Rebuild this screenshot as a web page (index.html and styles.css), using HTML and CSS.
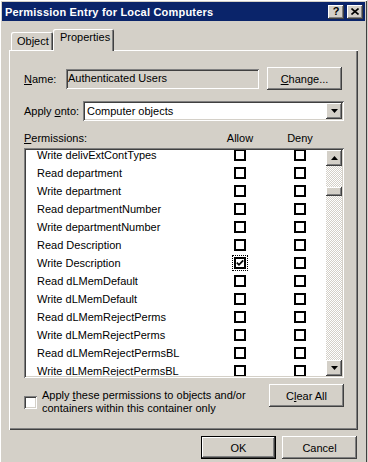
FILE: index.html
```html
<!DOCTYPE html>
<html lang="en">
<head>
  <title>Permission Entry for Local Computers</title>
  <meta charset="utf-8">
  <meta name="viewport" content="width=device-width, initial-scale=1">
  <link rel="stylesheet" href="styles.css">
</head>
<body>
  <div class="window">
    <div class="caption">
      <span class="caption-title">Permission Entry for Local Computers</span>
      <div class="caption-buttons">
        <button class="caption-button caption-help" type="button">?</button>
        <button class="caption-button" type="button" aria-label="Close">
          <svg width="8" height="7" viewBox="0 0 8 7">
            <path d="M0.5 0.5 L7.5 6.5 M7.5 0.5 L0.5 6.5" stroke="#000" stroke-width="1.6" fill="none"/>
          </svg>
        </button>
      </div>
    </div>

    <div class="dialog">
      <div class="tabs">
        <div class="tab">Object</div>
        <div class="tab tab-active">Properties</div>
      </div>

      <div class="panel">
        <div class="field-row">
          <span class="field-label label-name"><u>N</u>ame:</span>
          <div class="textbox">Authenticated Users</div>
          <button class="button" type="button"><u>C</u>hange...</button>
        </div>

        <div class="field-row row-apply">
          <span class="field-label label-apply">Apply <u>o</u>nto:</span>
          <div class="combo">
            <span class="combo-text">Computer objects</span>
            <span class="combo-button">
              <svg width="7" height="4" viewBox="0 0 7 4"><path d="M0 0 H7 L3.5 4 Z" fill="#000"/></svg>
            </span>
          </div>
        </div>

        <div class="perm-header">
          <span><u>P</u>ermissions:</span>
          <span class="perm-col">Allow</span>
          <span></span>
          <span class="perm-col">Deny</span>
        </div>

        <div class="perm-list">
          <div class="perm-viewport">
            <div class="perm-rows">
              <div class="perm-row"><span>Write delivExtContTypes</span><span class="check"></span><span class="check"></span></div>
              <div class="perm-row"><span>Read department</span><span class="check"></span><span class="check"></span></div>
              <div class="perm-row"><span>Write department</span><span class="check"></span><span class="check"></span></div>
              <div class="perm-row"><span>Read departmentNumber</span><span class="check"></span><span class="check"></span></div>
              <div class="perm-row"><span>Write departmentNumber</span><span class="check"></span><span class="check"></span></div>
              <div class="perm-row"><span>Read Description</span><span class="check"></span><span class="check"></span></div>
              <div class="perm-row">
                <span>Write Description</span>
                <span class="check check-on check-focus">
                  <svg width="8" height="8" viewBox="0 0 8 8"><path d="M0.8 3.6 L3 5.8 L7.2 1.4" stroke="#000" stroke-width="1.8" fill="none"/></svg>
                </span>
                <span class="check"></span>
              </div>
              <div class="perm-row"><span>Read dLMemDefault</span><span class="check"></span><span class="check"></span></div>
              <div class="perm-row"><span>Write dLMemDefault</span><span class="check"></span><span class="check"></span></div>
              <div class="perm-row"><span>Read dLMemRejectPerms</span><span class="check"></span><span class="check"></span></div>
              <div class="perm-row"><span>Write dLMemRejectPerms</span><span class="check"></span><span class="check"></span></div>
              <div class="perm-row"><span>Read dLMemRejectPermsBL</span><span class="check"></span><span class="check"></span></div>
              <div class="perm-row"><span>Write dLMemRejectPermsBL</span><span class="check"></span><span class="check"></span></div>
            </div>
          </div>
          <div class="scrollbar">
            <span class="scroll-button">
              <svg width="7" height="4" viewBox="0 0 7 4"><path d="M0 4 H7 L3.5 0 Z" fill="#000"/></svg>
            </span>
            <div class="scroll-track">
              <span class="scroll-thumb"></span>
            </div>
            <span class="scroll-button">
              <svg width="7" height="4" viewBox="0 0 7 4"><path d="M0 0 H7 L3.5 4 Z" fill="#000"/></svg>
            </span>
          </div>
        </div>

        <div class="apply-row">
          <label class="apply-check">
            <span class="check-3d"></span>
            <span>Apply <u>t</u>hese permissions to objects and/or<br>containers within this container only</span>
          </label>
          <button class="button" type="button">C<u>l</u>ear All</button>
        </div>
      </div>

      <div class="dialog-buttons">
        <button class="button button-default" type="button">OK</button>
        <button class="button" type="button">Cancel</button>
      </div>
    </div>
  </div>
</body>
</html>
```

FILE: styles.css
```css
*, *::before, *::after {
  margin: 0;
  padding: 0;
  box-sizing: border-box;
}

body {
  width: 368px;
  height: 462px;
  overflow: hidden;
  background-color: #D4D0C8;
  color: #000000;
  font-family: "Liberation Sans", Arial, sans-serif;
  font-size: 11px;
}

u {
  text-decoration-thickness: 1px;
  text-underline-offset: 1px;
}

/* window frame */

.window {
  width: 367px;
  height: 470px;
  padding: 2px;
  background-color: #D4D0C8;
  box-shadow: inset 1px 1px #FFFFFF, inset -1px -1px #404040;
}

.caption {
  display: flex;
  align-items: center;
  justify-content: space-between;
  height: 19px;
  padding: 0 2px 0 3px;
  background-color: #0A246A;
  color: #FFFFFF;
}

.caption-title {
  font-weight: bold;
  font-size: 11px;
  letter-spacing: 0.2px;
}

.caption-buttons {
  display: flex;
  gap: 3px;
}

.caption-button {
  display: flex;
  align-items: center;
  justify-content: center;
  width: 16px;
  height: 14px;
  border: none;
  background-color: #D4D0C8;
  box-shadow: inset -1px -1px #404040, inset 1px 1px #FFFFFF, inset -2px -2px #808080;
  color: #000000;
  font-family: inherit;
  font-size: 11px;
  font-weight: bold;
  line-height: 1;
}

/* buttons */

.button {
  width: 75px;
  height: 23px;
  border: none;
  background-color: #D4D0C8;
  box-shadow: inset -1px -1px #404040, inset 1px 1px #FFFFFF, inset -2px -2px #808080;
  color: #000000;
  font-family: inherit;
  font-size: 11px;
}

.button-default {
  box-shadow: inset 0 0 0 1px #000000, inset -2px -2px #404040, inset 2px 2px #FFFFFF, inset -3px -3px #808080;
}

/* tabs */

.dialog {
  padding: 8px 7px 0;
}

.tabs {
  display: flex;
  align-items: flex-end;
  padding-left: 2px;
  height: 21px;
  position: relative;
  z-index: 1;
}

.tab {
  width: 42px;
  height: 18px;
  padding: 3px 0 0 6px;
  border-radius: 2px 2px 0 0;
  box-shadow: inset 1px 1px #FFFFFF, inset -1px 0 #404040, inset -2px 0 #808080;
}

.tab-active {
  width: 61px;
  height: 22px;
  margin-bottom: -1px;
  padding: 2px 0 0 7px;
  background-color: #D4D0C8;
}

.panel {
  height: 380px;
  padding: 17px 14px 0 15px;
  box-shadow: inset 1px 1px #FFFFFF, inset -1px -1px #404040, inset -2px -2px #808080;
}

/* name / apply onto */

.field-row {
  display: flex;
  align-items: center;
}

.field-label {
  flex: none;
}

.label-name {
  width: 42px;
}

.label-apply {
  width: 59px;
}

.row-apply {
  margin-top: 11px;
}

.textbox {
  width: 193px;
  height: 20px;
  margin-right: 8px;
  padding: 3px 2px;
  box-shadow: inset 1px 1px #808080, inset -1px -1px #FFFFFF, inset 2px 2px #404040, inset -2px -2px #D4D0C8;
}

.combo {
  display: flex;
  align-items: center;
  justify-content: space-between;
  flex: 1;
  height: 20px;
  padding: 2px 2px 2px 4px;
  background-color: #FFFFFF;
  box-shadow: inset 1px 1px #808080, inset -1px -1px #FFFFFF, inset 2px 2px #404040, inset -2px -2px #D4D0C8;
}

.combo-button,
.scroll-button {
  display: flex;
  align-items: center;
  justify-content: center;
  width: 16px;
  height: 16px;
  background-color: #D4D0C8;
  box-shadow: inset -1px -1px #404040, inset 1px 1px #FFFFFF, inset -2px -2px #808080;
}

/* permission list */

.perm-header {
  display: grid;
  grid-template-columns: 198px 36px 24px 36px;
  margin-top: 11px;
  height: 16px;
}

.perm-col {
  text-align: center;
}

.perm-list {
  display: flex;
  height: 230px;
  padding: 2px;
  background-color: #FFFFFF;
  box-shadow: inset 1px 1px #808080, inset -1px -1px #FFFFFF, inset 2px 2px #404040, inset -2px -2px #D4D0C8;
}

.perm-viewport {
  flex: 1;
  overflow: hidden;
}

.perm-rows {
  margin-top: -4px;
}

.perm-row {
  display: grid;
  grid-template-columns: 197px 60px 12px;
  align-items: center;
  height: 18px;
  padding-left: 11px;
}

.check {
  display: flex;
  align-items: center;
  justify-content: center;
  width: 12px;
  height: 12px;
  border: 2px solid #000000;
  background-color: #FFFFFF;
}

.check-focus {
  outline: 1px dotted #000000;
  outline-offset: 1px;
}

.scrollbar {
  display: flex;
  flex-direction: column;
  width: 16px;
}

.scroll-track {
  flex: 1;
  padding-top: 21px;
  background: repeating-conic-gradient(#D4D0C8 0% 25%, #FFFFFF 0% 50%) 0 0 / 2px 2px;
}

.scroll-thumb {
  display: block;
  height: 9px;
  background-color: #D4D0C8;
  box-shadow: inset -1px -1px #404040, inset 1px 1px #FFFFFF, inset -2px -2px #808080;
}

/* bottom of panel */

.apply-row {
  display: flex;
  justify-content: space-between;
  align-items: flex-start;
  margin-top: 6px;
}

.apply-check {
  display: flex;
  align-items: center;
  gap: 5px;
  margin-top: 5px;
  line-height: 13px;
}

.check-3d {
  flex: none;
  width: 13px;
  height: 13px;
  background-color: #FFFFFF;
  box-shadow: inset 1px 1px #808080, inset -1px -1px #FFFFFF, inset 2px 2px #404040, inset -2px -2px #D4D0C8;
}

.dialog-buttons {
  display: flex;
  justify-content: flex-end;
  gap: 6px;
  margin-top: 6px;
  padding-right: 1px;
}
```
